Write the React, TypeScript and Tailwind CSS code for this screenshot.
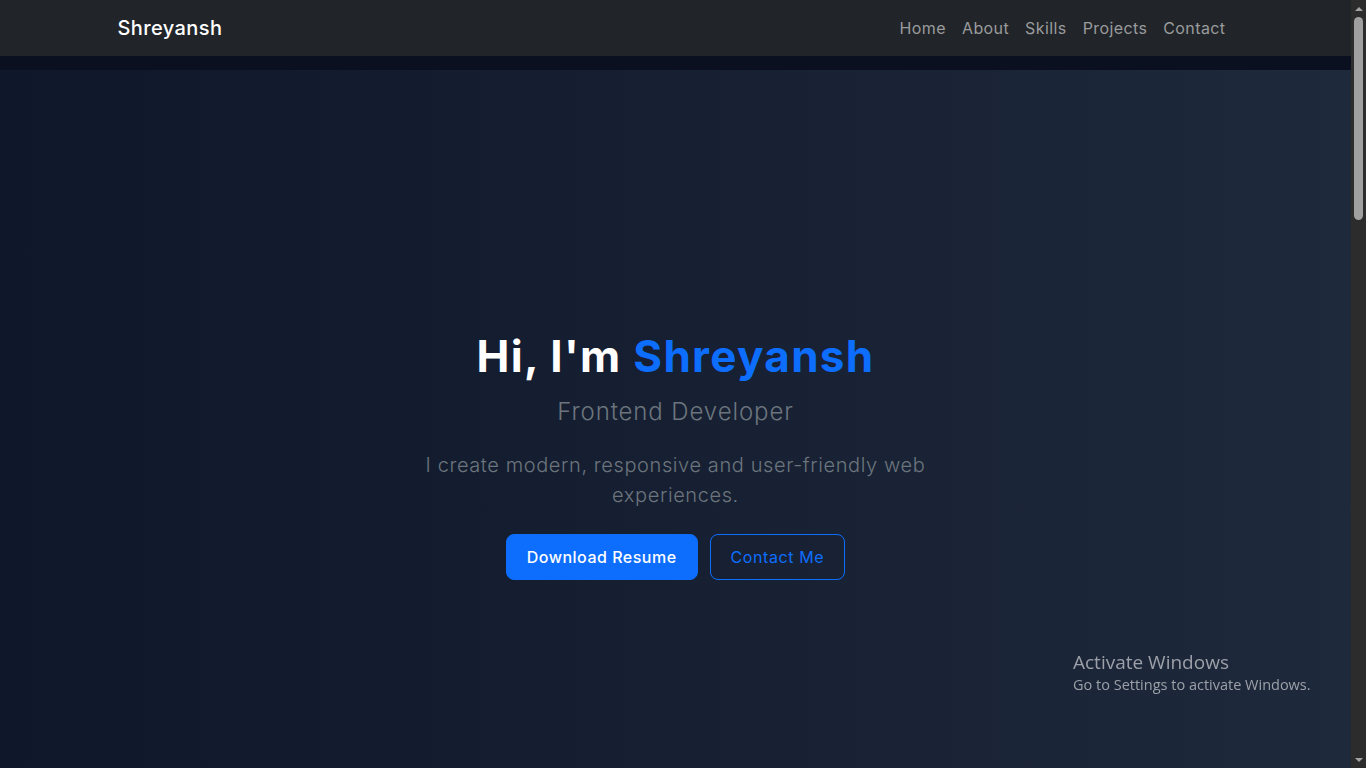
import React from "react";

const NAV = ["Home", "About", "Skills", "Projects", "Contact"];

// browser-style scrollbar on the right edge, as in the capture
function Scrollbar() {
  return (
    <div className="w-[15px] shrink-0 bg-[#2c2c2c] flex flex-col items-center">
      <div className="h-[17px] w-full flex items-center justify-center">
        <div className="w-0 h-0 border-l-[4px] border-r-[4px] border-b-[4px] border-l-transparent border-r-transparent border-b-[#a3a3a3]" />
      </div>
      <div className="w-[9px] h-[203px] rounded-full bg-[#a0a0a0]" />
      <div className="flex-1" />
      <div className="h-[17px] w-full flex items-center justify-center">
        <div className="w-0 h-0 border-l-[4px] border-r-[4px] border-t-[4px] border-l-transparent border-r-transparent border-t-[#a3a3a3]" />
      </div>
    </div>
  );
}

export default function App() {
  return (
    <div className="h-screen flex overflow-hidden bg-[#0a1020] text-white font-['Inter',sans-serif]">
      <div className="flex-1 min-w-0 flex flex-col overflow-hidden">
        {/* top bar */}
        <header className="bg-[#212529] h-14 shrink-0">
          <div className="mx-auto max-w-[1140px] h-full px-3 flex items-center justify-between">
            <a href="#" className="text-[20px] font-medium tracking-[0.4px] text-white">
              Shreyansh
            </a>
            <nav className="flex items-center">
              {NAV.map((n) => (
                <a
                  key={n}
                  href={`#${n.toLowerCase()}`}
                  className="px-2 text-[16px] tracking-[0.4px] text-[#9a9b9d]"
                >
                  {n}
                </a>
              ))}
            </nav>
          </div>
        </header>

        <div className="h-[14px] shrink-0" />

        {/* hero */}
        <section
          id="home"
          className="h-screen shrink-0 bg-gradient-to-r from-[#0f172a] to-[#1e293b] flex items-center justify-center"
        >
          <div className="flex flex-col items-center text-center">
            <h1 className="pt-[2px] text-[44px] leading-[1.2] font-bold tracking-[1.3px] mb-[15px]">
              Hi, I'm <span className="text-[#0d6efd]">Shreyansh</span>
            </h1>
            <p className="text-[24px] leading-[1.2] font-light tracking-[0.9px] text-[#6c757d]">
              Frontend Developer
            </p>
            <p className="mt-[24px] max-w-[540px] text-[20px] leading-[30px] font-light tracking-[0.6px] text-[#6c757d]">
              I create modern, responsive and user-friendly web experiences.
            </p>
            <div className="mt-6 flex items-center gap-3">
              <a
                href="#"
                className="h-[46px] px-5 flex items-center rounded-lg bg-[#0d6efd] border border-[#0d6efd] text-[16px] font-medium tracking-[0.5px] text-white"
              >
                Download Resume
              </a>
              <a
                href="#contact"
                className="h-[46px] px-5 flex items-center rounded-lg border border-[#0d6efd] text-[16px] tracking-[0.6px] text-[#0d6efd]"
              >
                Contact Me
              </a>
            </div>
          </div>
        </section>
      </div>

      <Scrollbar />

      {/* windows watermark */}
      <div className="fixed left-[1073px] top-[650px] pointer-events-none font-['Open_Sans',sans-serif] text-[#9ca0a8]">
        <p className="text-[19px] leading-[24px]">Activate Windows</p>
        <p className="text-[14.5px] leading-[22px]">Go to Settings to activate Windows.</p>
      </div>
    </div>
  );
}
